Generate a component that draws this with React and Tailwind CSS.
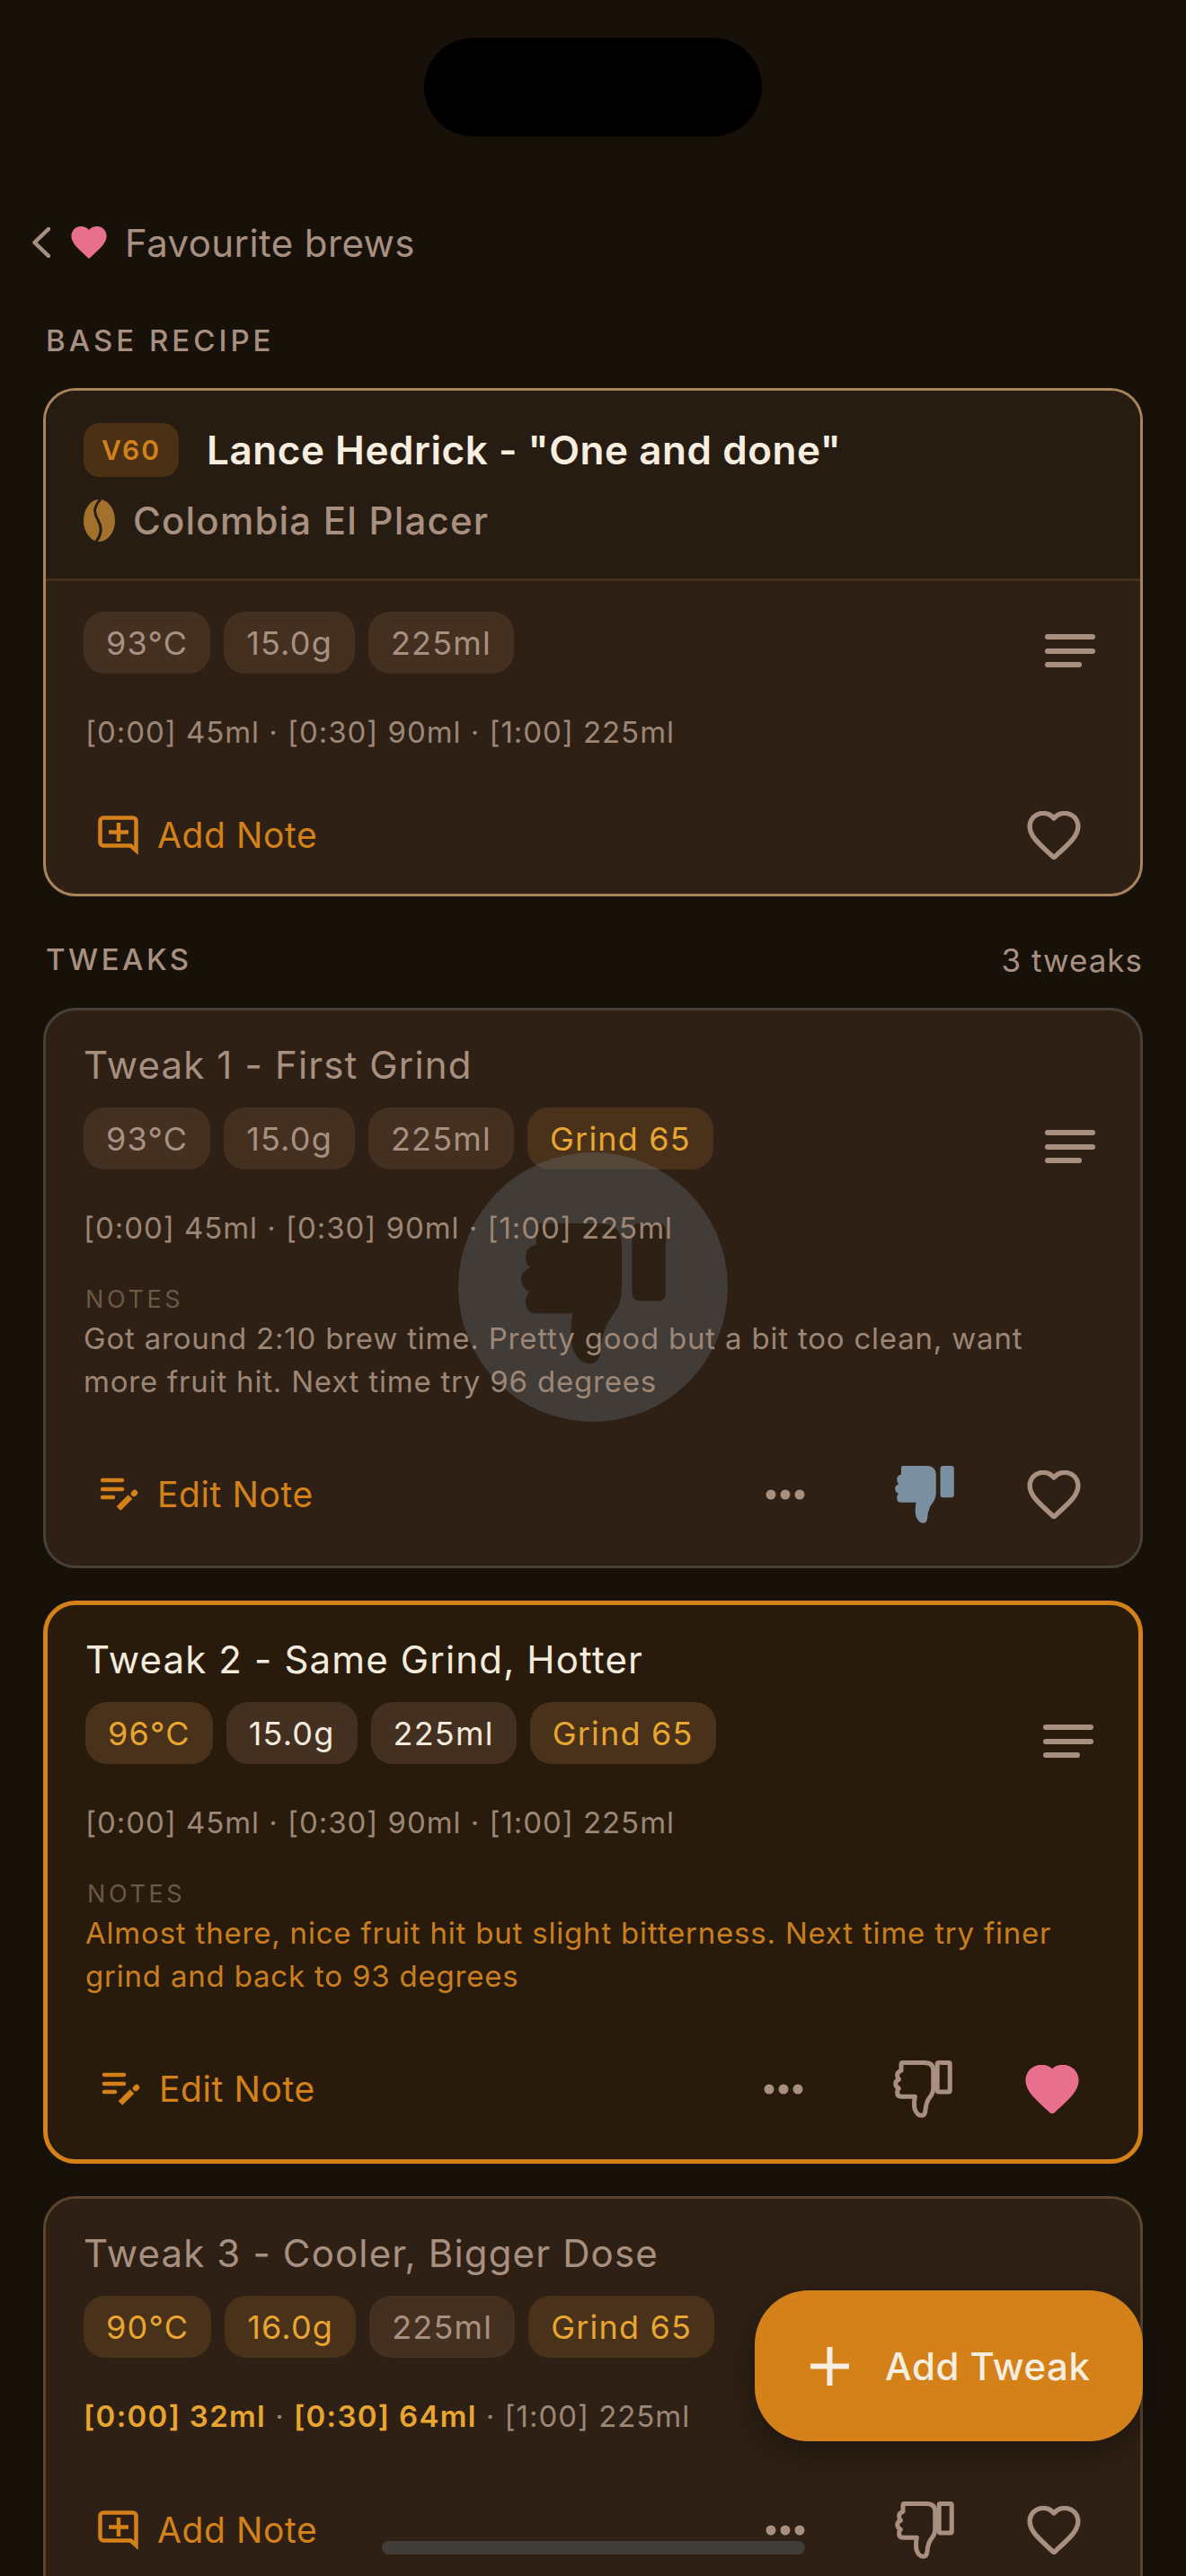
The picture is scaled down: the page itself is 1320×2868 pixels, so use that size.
import React from 'react';

const heart = 'M12 21.35l-1.45-1.32C5.4 15.36 2 12.28 2 8.5 2 5.42 4.42 3 7.5 3c1.74 0 3.41.81 4.5 2.09C13.09 3.81 14.76 3 16.5 3 19.58 3 22 5.42 22 8.5c0 3.78-3.4 6.86-8.55 11.54L12 21.35z';
const thumb = 'M60 0H255Q335 0 335 70V220Q335 270 305 305Q270 350 265 420Q262 468 230 468Q190 468 170 410Q160 360 172 300H50Q15 300 15 262Q15 240 28 228Q0 215 0 185Q0 160 30 148Q15 135 15 110Q15 80 50 70V20Q50 0 60 0Z';

function Heart({ filled }) {
    const color = filled ? '#e8708e' : '#a89080';
    return (
        <svg viewBox="1 2.1 22 20.1" className="w-[60px] h-[54px] shrink-0">
            <path d={heart} fill={filled ? color : 'none'} stroke={color} strokeWidth="2" strokeLinejoin="round" />
        </svg>
    );
}

function Thumb({ mode }) {
    if (mode === 'outline') {
        return (
            <svg viewBox="-20 -20 522 510" className="w-[66px] h-[64px] shrink-0">
                <path d={thumb} fill="none" stroke="#a89080" strokeWidth="40" strokeLinejoin="round" />
                <rect x="370" y="0" width="112" height="258" rx="12" fill="none" stroke="#a89080" strokeWidth="40" />
            </svg>
        );
    }
    return (
        <svg viewBox="0 0 482 470" className="w-[66px] h-[64px] shrink-0">
            <path d={thumb} fill="#7a8fa0" />
            <rect x="370" y="0" width="112" height="258" rx="22" fill="#7a8fa0" />
        </svg>
    );
}

function LinesIcon() {
    return (
        <svg viewBox="0 0 56 38" className="w-[56px] h-[38px] mt-[25px] mr-[8px] shrink-0">
            <path d="M3 3H53M3 19H53M3 34H38" fill="none" stroke="#a89080" strokeWidth="6" strokeLinecap="round" />
        </svg>
    );
}

function Dots() {
    return (
        <svg viewBox="0 0 44 12" className="w-[44px] h-[12px] shrink-0">
            <circle cx="6" cy="6" r="5.5" fill="#a89080" />
            <circle cx="22" cy="6" r="5.5" fill="#a89080" />
            <circle cx="38" cy="6" r="5.5" fill="#a89080" />
        </svg>
    );
}

function AddNoteIcon() {
    return (
        <svg viewBox="0 0 45 45" className="w-[45px] h-[45px] shrink-0">
            <path d="M6 2.5H39a3.5 3.5 0 0 1 3.5 3.5V39L36.5 33.5H6a3.5 3.5 0 0 1-3.5-3.5V6A3.5 3.5 0 0 1 6 2.5Z" fill="none" stroke="#d4811a" strokeWidth="4.5" strokeMiterlimit="8" />
            <path d="M23 8V29M12 18.5H34" fill="none" stroke="#d4811a" strokeWidth="4.5" />
        </svg>
    );
}

function EditNoteIcon() {
    return (
        <svg viewBox="0 0 45 38" className="w-[45px] h-[38px] shrink-0">
            <path d="M5 3H27M5 13H27M5 22H17" fill="none" stroke="#d4811a" strokeWidth="4.5" strokeLinecap="round" />
            <path d="M23 34.5L36 21.5" fill="none" stroke="#d4811a" strokeWidth="6.5" />
            <path d="M40 18L41 17" fill="none" stroke="#d4811a" strokeWidth="6.5" strokeLinecap="round" />
        </svg>
    );
}

function Bean() {
    return (
        <svg viewBox="0 0 35 47" className="w-[35px] h-[47px] shrink-0">
            <ellipse cx="17.5" cy="23.5" rx="17.5" ry="23.5" fill="#a2722c" />
            <path d="M19 0C11 8 11 15 16 23C21 31 20 39 14 47" fill="none" stroke="#271c11" strokeWidth="3" />
        </svg>
    );
}

function Chip({ text, changed, bright }) {
    const color = changed ? 'bg-[#49311a] text-[#e8a530]' : bright ? 'bg-[#433020] text-[#f5ebdd]' : 'bg-[#433020] text-[#a89080]';
    return (
        <div className={'h-[69px] px-[25px] rounded-[24px] flex items-center text-[36px] tracking-[1.2px] ' + color}>{text}</div>
    );
}

function ChipRow({ chips }) {
    return (
        <div className="flex items-start justify-between">
            <div className="flex gap-[15px]">
                {chips.map((c) => (
                    <Chip key={c.text} {...c} />
                ))}
            </div>
            <LinesIcon />
        </div>
    );
}

function NoteButton({ edit }) {
    return (
        <div className="flex items-center gap-[21px] pl-[16px] text-[39px] text-[#d4811a] tracking-[0.6px]">
            {edit ? <EditNoteIcon /> : <AddNoteIcon />}
            <span>{edit ? 'Edit Note' : 'Add Note'}</span>
        </div>
    );
}

function TweakCard({ title, chips, pours, note, edit, active, border, disliked, liked, overlay, height }) {
    return (
        <div className={'relative shrink-0 rounded-[36px] px-[42px] pt-[32px] ' + (active ? 'border-[5px] border-[#d4811a] bg-[#281b0c]' : 'border-[3px] bg-[#2e2014] ' + border) + ' ' + height}>
            <div className={'h-[56px] flex items-center text-[42px] tracking-[1.15px] ' + (active ? 'text-[#f5ebdd]' : 'text-[#a89080]')}>{title}</div>
            <div className="mt-[20px]">
                <ChipRow chips={chips} />
            </div>
            {overlay && (
                <div className="absolute left-[459px] top-[158px] w-[300px] h-[300px] rounded-full bg-[#7a8fa0]/25 flex items-center justify-center">
                    <svg viewBox="0 0 482 470" className="w-[161px] h-[157px] mt-[14px]">
                        <path d={thumb} fill="#2d2014" />
                        <rect x="370" y="0" width="112" height="258" rx="22" fill="#2d2014" />
                    </svg>
                </div>
            )}
            <div className="relative z-10 mt-[42px] h-[48px] flex items-center text-[33px] tracking-[0.95px] text-[#9c8676] whitespace-pre">
                {pours.map((p, i) => (
                    <span key={i} className={p.changed ? 'text-[#e8a530] font-semibold tracking-[1.3px]' : ''}>{p.text}</span>
                ))}
            </div>
            {note && (
                <div className="relative z-10">
                    <div className="mt-[40px] pl-[2px] h-[30px] flex items-center text-[27px] tracking-[3.6px] text-[#6b5846]">NOTES</div>
                    <div className={'mt-[4px] text-[33px] leading-[48px] tracking-[0.8px] whitespace-pre-line ' + (active ? 'text-[#c97f1e]' : 'text-[#9c8676]')}>{note}</div>
                </div>
            )}
            <div className="mt-[69px] h-[66px] flex items-center">
                <NoteButton edit={edit} />
                <div className="flex-1" />
                <Dots />
                <div className="w-[100px]" />
                <Thumb mode={disliked ? 'filled' : 'outline'} />
                <div className="w-[81px]" />
                <Heart filled={liked} />
                <div className="w-[24px]" />
            </div>
        </div>
    );
}

const pourBase = [{ text: '[0:00] 45ml · [0:30] 90ml · [1:00] 225ml' }];

export default function App() {
    return (
        <div className="relative w-[1320px] h-[2868px] overflow-hidden bg-[#18110a] font-[Inter,sans-serif]">
            <div className="absolute left-[472px] top-[42px] w-[376px] h-[110px] rounded-full bg-black" />

            <div className="pt-[240px] pl-[36px] h-[300px] flex items-center">
                <svg viewBox="0 0 20 34" className="w-[20px] h-[34px]">
                    <path d="M18 2L2.5 17L18 32" fill="none" stroke="#a89080" strokeWidth="4.5" strokeLinecap="round" strokeLinejoin="round" />
                </svg>
                <svg viewBox="2 3 20 18.35" className="ml-[23px] w-[40px] h-[36px]">
                    <path d={heart} fill="#e8708e" />
                </svg>
                <span className="ml-[20px] text-[42px] tracking-[0.4px] text-[#a89080]">Favourite brews</span>
            </div>

            <div className="px-[48px]">
                <div className="mt-[60px] pl-[3px] h-[40px] flex items-center text-[33px] font-medium tracking-[4px] text-[#a89080]">BASE RECIPE</div>

                <div className="mt-[32px] h-[566px] rounded-[36px] border-[3px] border-[#a8845c] overflow-hidden bg-[#2e2014]">
                    <div className="h-[212px] pt-[36px] px-[42px] bg-[#271c11] border-b-[3px] border-[#452f19]">
                        <div className="flex items-center h-[60px]">
                            <div className="w-[106px] h-[60px] rounded-[18px] bg-[#4a3115] flex items-center justify-center text-[30px] font-semibold tracking-[2px] text-[#d4811a]">V60</div>
                            <div className="ml-[31px] text-[44px] font-semibold tracking-[0.55px] text-[#f8eee0]">Lance Hedrick - "One and done"</div>
                        </div>
                        <div className="mt-[24px] h-[48px] flex items-center gap-[20px]">
                            <Bean />
                            <span className="text-[42px] font-medium tracking-[1.2px] text-[#a89080]">Colombia El Placer</span>
                        </div>
                    </div>
                    <div className="pt-[34px] px-[42px]">
                        <ChipRow chips={[{ text: '93°C' }, { text: '15.0g' }, { text: '225ml' }]} />
                        <div className="mt-[42px] h-[48px] pl-[2px] flex items-center text-[33px] tracking-[0.95px] text-[#9c8676]">[0:00] 45ml · [0:30] 90ml · [1:00] 225ml</div>
                        <div className="mt-[57px] h-[66px] flex items-center justify-between">
                            <NoteButton />
                            <div className="mr-[24px]">
                                <Heart />
                            </div>
                        </div>
                    </div>
                </div>

                <div className="mt-[51px] h-[40px] pl-[3px] flex items-center justify-between text-[#a89080]">
                    <span className="text-[33px] font-medium tracking-[3.5px]">TWEAKS</span>
                    <span className="text-[35px] tracking-[1px]">3 tweaks</span>
                </div>

                <div className="mt-[33px] flex flex-col gap-[36px]">
                    <TweakCard
                        title="Tweak 1 - First Grind"
                        chips={[{ text: '93°C' }, { text: '15.0g' }, { text: '225ml' }, { text: 'Grind 65', changed: true }]}
                        pours={pourBase}
                        note={'Got around 2:10 brew time. Pretty good but a bit too clean, want\nmore fruit hit. Next time try 96 degrees'}
                        edit
                        disliked
                        overlay
                        border="border-[#454038]"
                        height="h-[624px]"
                    />
                    <TweakCard
                        title="Tweak 2 - Same Grind, Hotter"
                        chips={[{ text: '96°C', changed: true }, { text: '15.0g', bright: true }, { text: '225ml', bright: true }, { text: 'Grind 65', changed: true }]}
                        pours={pourBase}
                        note={'Almost there, nice fruit hit but slight bitterness. Next time try finer\ngrind and back to 93 degrees'}
                        edit
                        active
                        liked
                        height="h-[627px]"
                    />
                    <TweakCard
                        title="Tweak 3 - Cooler, Bigger Dose"
                        chips={[{ text: '90°C', changed: true }, { text: '16.0g', changed: true }, { text: '225ml' }, { text: 'Grind 65', changed: true }]}
                        pours={[{ text: '[0:00] 32ml', changed: true }, { text: ' · ' }, { text: '[0:30] 64ml', changed: true }, { text: ' · ' }, { text: '[1:00] 225ml' }]}
                        border="border-[#5c452e]"
                        height="h-[560px]"
                    />
                </div>
            </div>

            <div className="absolute left-[840px] top-[2550px] w-[432px] h-[168px] rounded-[60px] bg-[#d4811a] shadow-[0_12px_36px_rgba(0,0,0,0.35)] flex items-center pl-[62px] gap-[40px] text-[42px] font-medium tracking-[0.5px] text-[#f8eee0]">
                <svg viewBox="0 0 43 43" className="w-[43px] h-[43px] shrink-0">
                    <path d="M21.5 0V43M0 21.5H43" fill="none" stroke="#f8eee0" strokeWidth="6" />
                </svg>
                <span>Add Tweak</span>
            </div>

            <div className="absolute left-[425px] top-[2829px] w-[471px] h-[15px] rounded-full bg-[#403c36]" />
        </div>
    );
}
